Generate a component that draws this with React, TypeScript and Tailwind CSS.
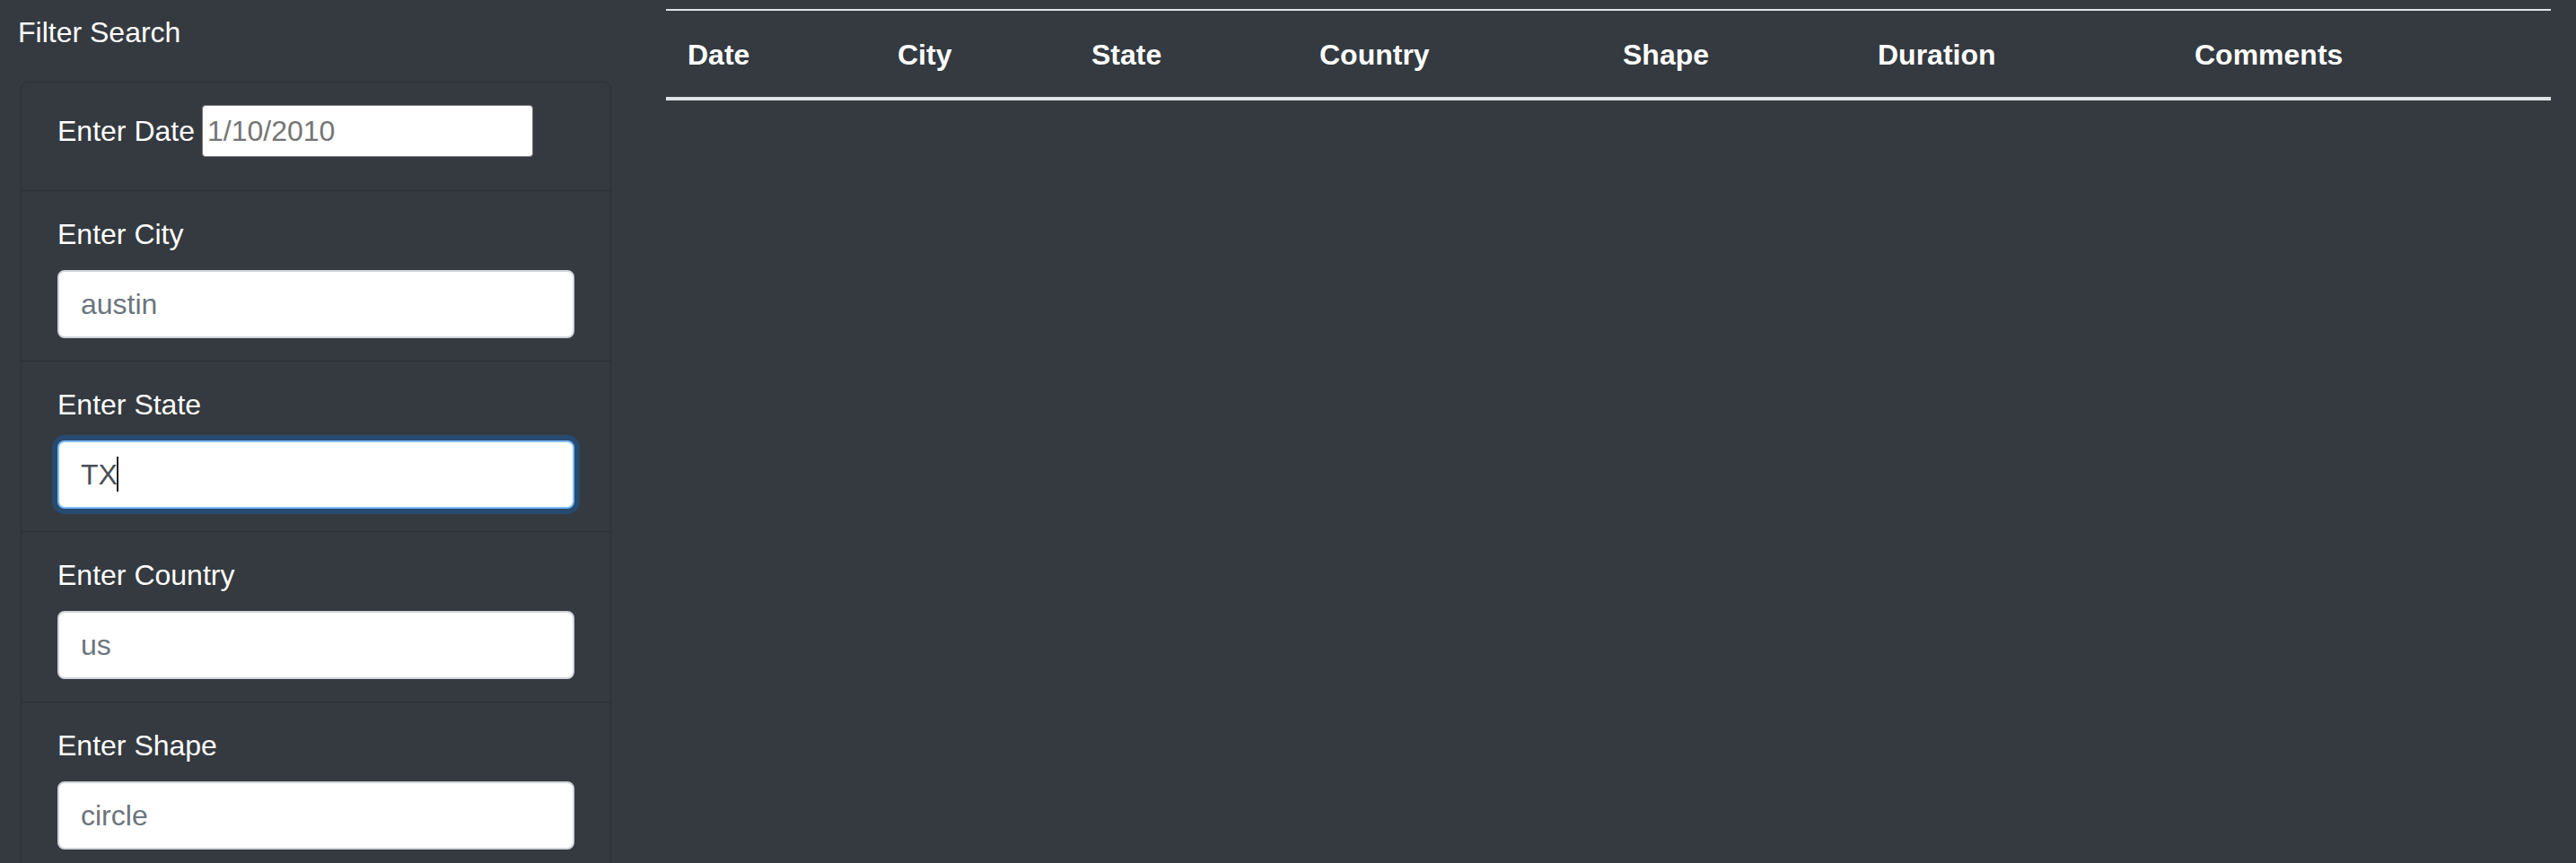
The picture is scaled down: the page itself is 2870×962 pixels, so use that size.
import React from "react";

type Field = {
  label: string;
  placeholder?: string;
  value?: string;
  focused?: boolean;
};

const fields: Field[] = [
  { label: "Enter City", placeholder: "austin" },
  { label: "Enter State", value: "TX", focused: true },
  { label: "Enter Country", placeholder: "us" },
  { label: "Enter Shape", placeholder: "circle" },
];

const columns = [
  { title: "Date", w: "w-[234px]" },
  { title: "City", w: "w-[216px]" },
  { title: "State", w: "w-[254px]" },
  { title: "Country", w: "w-[338px]" },
  { title: "Shape", w: "w-[284px]" },
  { title: "Duration", w: "w-[353px]" },
  { title: "Comments", w: "w-[421px]" },
];

const FilterItem = ({ label, placeholder, value, focused }: Field) => {
  return (
    <li className="border-t border-[#2b3035] px-[40px] pt-[24px] pb-[25px]">
      <label className="block text-[32px] leading-[48px] text-white mb-[16px]">{label}</label>
      <div className="relative">
        <input
          type="text"
          readOnly
          placeholder={placeholder}
          defaultValue={value}
          className={
            focused
              ? "block w-full h-[76px] rounded-[8px] bg-white px-[24px] text-[32px] text-[#495057] border-2 border-[#80bdff] shadow-[0_0_0_6px_rgba(0,123,255,0.25)] outline-none"
              : "block w-full h-[76px] rounded-[8px] bg-white px-[24px] text-[32px] text-[#495057] border-2 border-[#ced4da] placeholder:text-[#6c757d] outline-none"
          }
        />
        {focused && <span className="absolute left-[66px] top-[18px] w-[2px] h-[39px] bg-[#222]" />}
      </div>
    </li>
  );
};

export default function App() {
  return (
    <div className="flex w-full h-[962px] overflow-hidden bg-[#343a40] font-['Liberation_Sans',Arial,sans-serif]">
      {/* filter panel */}
      <div className="w-[718px] shrink-0 pt-[12px] pl-[20px] pr-[37px]">
        <h5 className="text-[32px] leading-[48px] text-white mb-[31px]">Filter Search</h5>
        <ul className="ml-[3px] border border-[#2b3035] rounded-[8px]">
          <li className="px-[40px] pt-[24px] pb-[24px]">
            <div className="flex items-start h-[72px]">
              <label className="mt-[6px] text-[32px] leading-[48px] text-white">Enter Date</label>
              <input
                type="text"
                readOnly
                placeholder="1/10/2010"
                className="ml-[8px] mt-[1px] w-[369px] h-[58px] rounded-[4px] bg-white border border-[#767676] px-[5px] text-[32px] placeholder:text-[#757575] outline-none"
              />
            </div>
          </li>
          {fields.map((f) => (
            <FilterItem key={f.label} {...f} />
          ))}
        </ul>
      </div>

      {/* results table */}
      <div className="flex-1 pt-[10px] pl-[24px] pr-[28px]">
        <table className="w-full table-fixed border-collapse">
          <thead>
            <tr>
              {columns.map((c) => (
                <th
                  key={c.title}
                  className={`${c.w} text-left align-bottom px-[24px] pt-[25px] pb-[23px] text-[32px] leading-[48px] font-bold text-white border-t-2 border-b-4 border-[#dee2e6]`}
                >
                  {c.title}
                </th>
              ))}
            </tr>
          </thead>
          <tbody></tbody>
        </table>
      </div>
    </div>
  );
}
